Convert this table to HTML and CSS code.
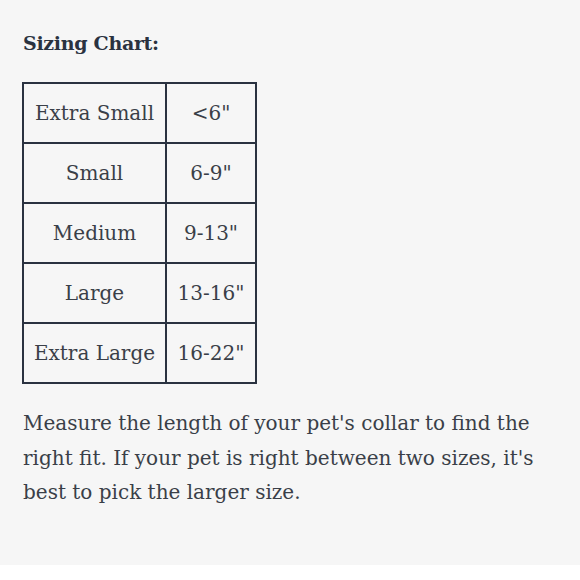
FILE: index.html
```html
<!DOCTYPE html>
<html>
<head>
<meta charset="utf-8">
<link rel="stylesheet" href="styles.css">
</head>
<body>
<div class="panel">
  <h2 class="title">Sizing Chart:</h2>
  <table class="chart">
    <tr><td class="size">Extra Small</td><td class="range">&lt;6"</td></tr>
    <tr><td class="size">Small</td><td class="range">6-9"</td></tr>
    <tr><td class="size">Medium</td><td class="range">9-13"</td></tr>
    <tr><td class="size">Large</td><td class="range">13-16"</td></tr>
    <tr><td class="size">Extra Large</td><td class="range">16-22"</td></tr>
  </table>
  <p class="note">Measure the length of your pet's collar to find the right fit. If your pet is right between two sizes, it's best to pick the larger size.</p>
</div>
</body>
</html>
```
FILE: styles.css
```css
html, body {
  margin: 0;
  padding: 0;
  background: #ffffff;
}
.panel {
  background: #f6f6f6;
  height: 565px;
  box-sizing: border-box;
  padding: 28px 23px 0 22px;
  font-family: "DejaVu Serif", serif;
  color: #3a3f48;
}
.title {
  margin: 0 0 0 1px;
  font-size: 19px;
  font-weight: bold;
  letter-spacing: -0.3px;
  color: #2a3240;
  line-height: 30px;
}
.chart {
  margin-top: 24px;
  border-collapse: collapse;
  border: 2px solid #2a3240;
}
.chart td {
  border: 2px solid #2a3240;
  height: 58px;
  padding: 0 8px;
  text-align: center;
  font-size: 20px;
  color: #3a3f48;
}
.size { width: 125px; }
.range { width: 72px; }
.note {
  margin: 22px 0 0 1px;
  font-size: 20px;
  line-height: 34.5px;
}
```
